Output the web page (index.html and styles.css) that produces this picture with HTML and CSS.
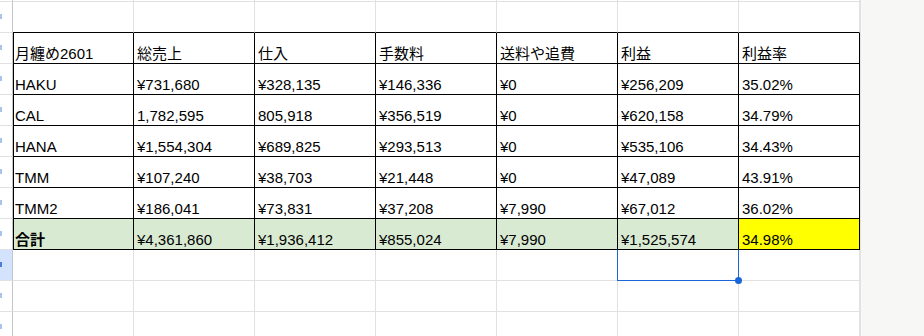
FILE: index.html
```html
<!DOCTYPE html>
<html lang="ja">
<head>
<meta charset="utf-8">
<title>月纏め2601</title>
<link rel="stylesheet" href="styles.css">
</head>
<body>
<div class="screen">
  <div class="sheet">
    <div class="rh top"></div><div class="c top"></div><div class="c top"></div><div class="c top"></div><div class="c top"></div><div class="c top"></div><div class="c top"></div><div class="c top"></div>

    <div class="rh"><span class="num"></span></div><div class="c above"></div><div class="c above"></div><div class="c above"></div><div class="c above"></div><div class="c above"></div><div class="c above"></div><div class="c above"></div>

    <div class="rh"><span class="num"></span></div><div class="c t first">月纏め2601</div><div class="c t">総売上</div><div class="c t">仕入</div><div class="c t">手数料</div><div class="c t">送料や追費</div><div class="c t">利益</div><div class="c t">利益率</div>

    <div class="rh"><span class="num"></span></div><div class="c t first">HAKU</div><div class="c t">¥731,680</div><div class="c t">¥328,135</div><div class="c t">¥146,336</div><div class="c t">¥0</div><div class="c t">¥256,209</div><div class="c t">35.02%</div>

    <div class="rh"><span class="num"></span></div><div class="c t first">CAL</div><div class="c t">1,782,595</div><div class="c t">805,918</div><div class="c t">¥356,519</div><div class="c t">¥0</div><div class="c t">¥620,158</div><div class="c t">34.79%</div>

    <div class="rh"><span class="num"></span></div><div class="c t first">HANA</div><div class="c t">¥1,554,304</div><div class="c t">¥689,825</div><div class="c t">¥293,513</div><div class="c t">¥0</div><div class="c t">¥535,106</div><div class="c t">34.43%</div>

    <div class="rh"><span class="num"></span></div><div class="c t first">TMM</div><div class="c t">¥107,240</div><div class="c t">¥38,703</div><div class="c t">¥21,448</div><div class="c t">¥0</div><div class="c t">¥47,089</div><div class="c t">43.91%</div>

    <div class="rh"><span class="num"></span></div><div class="c t first">TMM2</div><div class="c t">¥186,041</div><div class="c t">¥73,831</div><div class="c t">¥37,208</div><div class="c t">¥7,990</div><div class="c t">¥67,012</div><div class="c t">36.02%</div>

    <div class="rh"><span class="num"></span></div><div class="c t first total bold">合計</div><div class="c t total">¥4,361,860</div><div class="c t total">¥1,936,412</div><div class="c t total">¥855,024</div><div class="c t total">¥7,990</div><div class="c t total">¥1,525,574</div><div class="c t yellow">34.98%</div>

    <div class="rh sel"><span class="num"></span></div><div class="c"></div><div class="c"></div><div class="c"></div><div class="c"></div><div class="c"></div><div class="c active"><span class="sel-box"></span><span class="handle"></span></div><div class="c"></div>

    <div class="rh"><span class="num"></span></div><div class="c"></div><div class="c"></div><div class="c"></div><div class="c"></div><div class="c"></div><div class="c"></div><div class="c"></div>

    <div class="rh"><span class="num"></span></div><div class="c"></div><div class="c"></div><div class="c"></div><div class="c"></div><div class="c"></div><div class="c"></div><div class="c"></div>
  </div>
  <div class="panel"></div>
</div>
</body>
</html>
```

FILE: styles.css
```css
html, body {
  margin: 0;
  padding: 0;
  background: #ffffff;
}

body {
  font-family: "Liberation Sans", Arial, "Noto Sans CJK JP", sans-serif;
  font-size: 15px;
  color: #000000;
  overflow: hidden;
}

.screen {
  display: flex;
  width: 924px;
  height: 336px;
  overflow: hidden;
}

.sheet {
  flex: 0 0 860px;
  display: grid;
  grid-template-columns: 13px repeat(7, 121px);
  grid-template-rows: 2px;
  grid-auto-rows: 31px;
  align-content: start;
  background: #ffffff;
}

.panel {
  flex: 1;
  background: #f7f8f6;
  border-left: 1px solid #e3e3e3;
}

.rh {
  position: relative;
  box-sizing: border-box;
  border-right: 1px solid #c4c7c5;
  border-bottom: 1px solid #e1e1e1;
  background: #ffffff;
}

.rh.sel {
  background: #d3e3fd;
}

.num {
  position: absolute;
  left: 0;
  top: 12px;
  width: 2px;
  height: 5px;
  background: #a9c4ea;
}

.rh.sel .num {
  background: #4a7fd6;
}

.c {
  position: relative;
  box-sizing: border-box;
  border-right: 1px solid #e1e1e1;
  border-bottom: 1px solid #e1e1e1;
  padding: 0 3px 1px 3px;
  display: flex;
  align-items: flex-end;
  white-space: nowrap;
  line-height: 17px;
}

.c.above {
  border-bottom-color: #000000;
}

.c.t {
  border-right-color: #000000;
  border-bottom-color: #000000;
}

.c.first {
  box-shadow: inset 1px 0 0 #000000;
  padding-left: 2px;
}

.c.total {
  background: #d9ead3;
}

.c.yellow {
  background: #ffff00;
}

.bold {
  font-weight: bold;
}

.c.active {
  z-index: 2;
}

.sel-box {
  position: absolute;
  left: -1px;
  top: -1px;
  right: -1px;
  bottom: -1px;
  border: 1px solid #1a66d8;
  border-top-color: transparent;
}

.handle {
  position: absolute;
  right: -4px;
  bottom: -4px;
  width: 7px;
  height: 7px;
  border-radius: 50%;
  background: #1a66d8;
}
```
